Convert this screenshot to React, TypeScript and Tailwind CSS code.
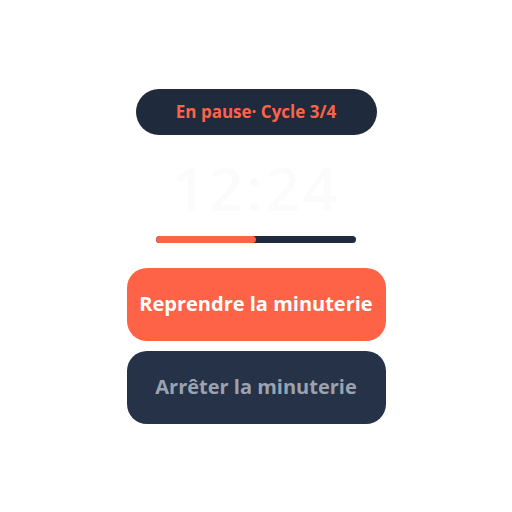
export default function App() {
  const progress = 50

  return (
    <div className="flex h-screen w-full items-center justify-center bg-white font-['Open_Sans',sans-serif]">
      <div className="flex w-[259px] flex-col items-center">
        <div className="flex h-[46px] w-[241px] items-center justify-center rounded-full bg-[#1f2a3c] text-[17px] font-bold text-[#ff6347]">
          En pause· Cycle 3/4
        </div>

        <div className="mt-[22px] h-[62px] text-[60px] leading-[62px] font-semibold tracking-[3px] text-[#fbfbfc]">
          12:24
        </div>

        <div className="mt-[17px] h-[7px] w-[200px] overflow-hidden rounded-full bg-[#1f2a3c]">
          <div className="h-full rounded-full bg-[#ff6347]" style={{ width: `${progress}%` }} />
        </div>

        <button className="mt-[25px] h-[73px] w-full rounded-[20px] bg-[#ff6347] text-[20px] font-bold text-white">
          Reprendre la minuterie
        </button>
        <button className="mt-[10px] h-[73px] w-full rounded-[20px] bg-[#263248] text-[20px] font-bold text-[#9ca3af]">
          Arrêter la minuterie
        </button>
      </div>
    </div>
  )
}
